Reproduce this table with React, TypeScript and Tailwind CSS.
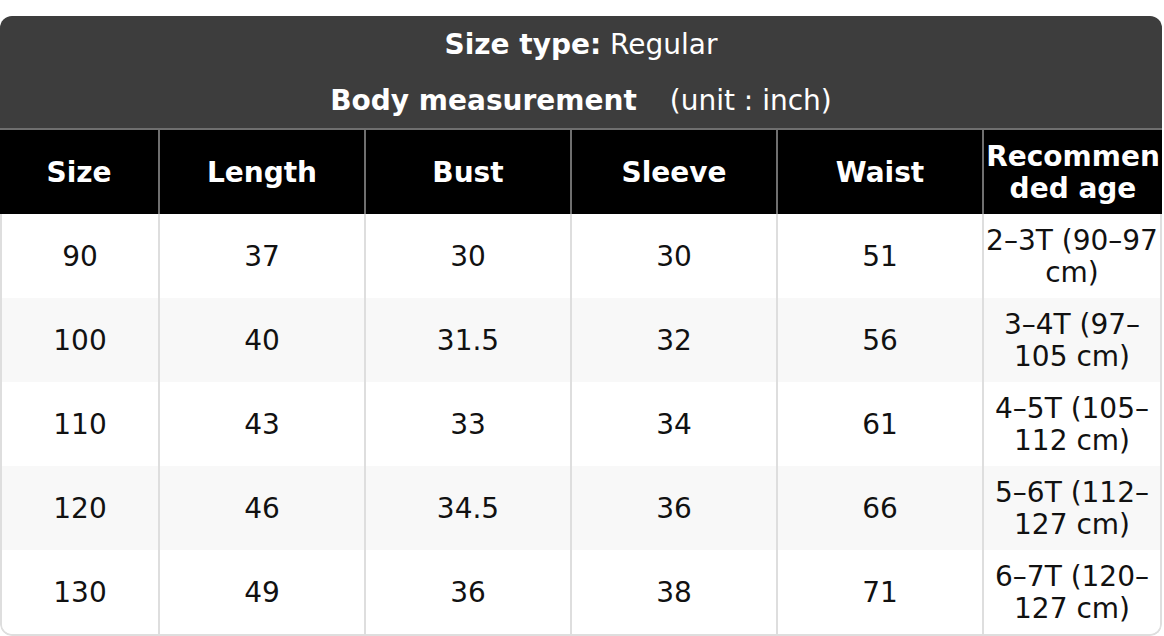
const columns = ["Size", "Length", "Bust", "Sleeve", "Waist", "Recommended age"];

const rows = [
  ["90", "37", "30", "30", "51", "2–3T (90–97 cm)"],
  ["100", "40", "31.5", "32", "56", "3–4T (97–105 cm)"],
  ["110", "43", "33", "34", "61", "4–5T (105–112 cm)"],
  ["120", "46", "34.5", "36", "66", "5–6T (112–127 cm)"],
  ["130", "49", "36", "38", "71", "6–7T (120–127 cm)"],
];

const grid = "grid grid-cols-[160px_206px_206px_206px_206px_178px]";

export default function App() {
  return (
    <div className="w-[1164px] h-[636px] bg-white pt-4 font-['DejaVu_Sans',sans-serif] text-[28px] leading-[32px]">
      <div className="w-[1162px] overflow-hidden rounded-t-[12px] rounded-b-[12px]">
        <div className="bg-[#3d3d3d] text-white">
          <div className="h-[56px] pt-px flex items-center justify-center">
            <span className="font-bold">Size type:</span>&nbsp;<span>Regular</span>
          </div>
          <div className="h-[56px] pt-px flex items-center justify-center">
            <span className="font-bold">Body measurement</span>
            <span className="ml-[33px]">(unit : inch)</span>
          </div>
        </div>
        <div className={`${grid} bg-black text-white font-bold border-t-2 border-[#6f6f6f]`}>
          {columns.map((c, i) => (
            <div
              key={c}
              className={`h-[84px] pt-px flex items-center justify-center text-center [overflow-wrap:anywhere] ${
                i < columns.length - 1 ? "border-r-2 border-[#6f6f6f]" : ""
              }`}
            >
              {c}
            </div>
          ))}
        </div>
        <div className="border-x-2 border-b-2 border-[#dedede] rounded-b-[12px] overflow-hidden text-[#111]">
          {rows.map((r, ri) => (
            <div key={r[0]} className={`${grid} -mx-[2px] ${ri % 2 === 1 ? "bg-[#f8f8f8]" : "bg-white"}`}>
              {r.map((v, i) => (
                <div
                  key={i}
                  className={`h-[84px] pt-px flex items-center justify-center text-center ${
                    i === 0 ? "pl-[2px]" : ""
                  } ${i < r.length - 1 ? "border-r-2 border-[#dedede]" : "pr-[2px]"}`}
                >
                  {v}
                </div>
              ))}
            </div>
          ))}
        </div>
      </div>
    </div>
  );
}
